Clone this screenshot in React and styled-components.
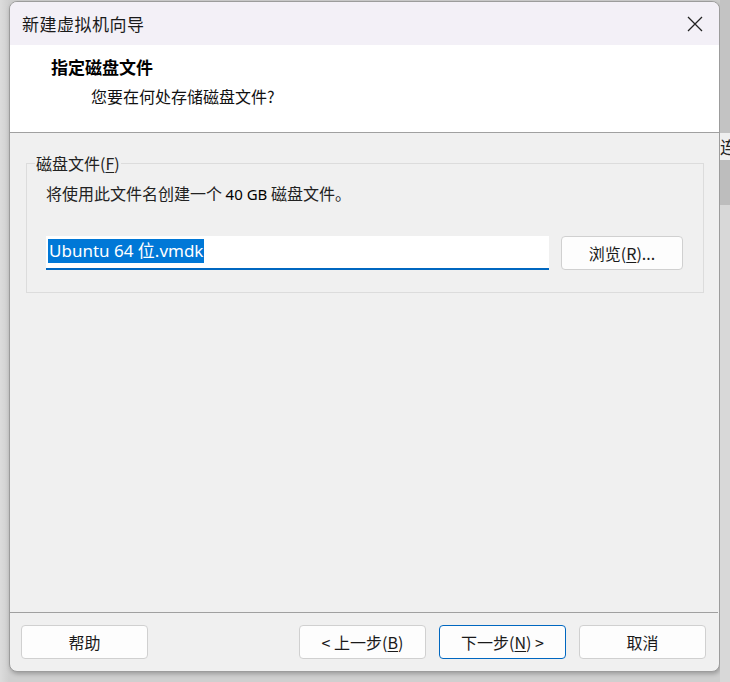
import styled, { createGlobalStyle } from "styled-components";

const GlobalStyle = createGlobalStyle`
  html, body {
    margin: 0;
    padding: 0;
    background: #d9d9d9;
    font-family: "Noto Sans CJK SC", "Noto Sans", sans-serif;
  }
`;

const Page = styled.div`
  display: flex;
  width: 730px;
  height: 682px;
  overflow: hidden;
  background: linear-gradient(to right, #dcdcdc, #cfcfcf 9px);
`;

const Gutter = styled.div`
  width: 9px;
  flex: none;
`;

const Window = styled.div`
  width: 711px;
  height: 671px;
  margin-top: 1px;
  flex: none;
  display: flex;
  flex-direction: column;
  background: #f0f0f0;
  border: 1px solid #9c9c9c;
  border-radius: 8px;
  box-sizing: border-box;
  overflow: hidden;
  box-shadow: 1px 2px 4px rgba(0, 0, 0, 0.25);
`;

const TitleBar = styled.div`
  height: 43px;
  flex: none;
  display: flex;
  align-items: center;
  justify-content: space-between;
  padding: 0 16px 0 12px;
  background: #f3f0f7;
`;

const Title = styled.div`
  font-size: 17px;
  color: #1a1a1a;
  letter-spacing: 0.5px;
`;

const CloseIcon = () => (
  <svg width="16" height="16" viewBox="0 0 16 16">
    <path d="M1 1 L15 15 M15 1 L1 15" stroke="#222" strokeWidth="1.3" fill="none" />
  </svg>
);

const Header = styled.div`
  height: 88px;
  flex: none;
  background: #ffffff;
  border-bottom: 1px solid #a0a0a0;
  padding: 10px 0 0 41px;
  box-sizing: border-box;
`;

const Heading = styled.div`
  font-size: 17px;
  font-weight: 700;
  color: #000;
  line-height: 24px;
`;

const SubHeading = styled.div`
  font-size: 16px;
  color: #111;
  line-height: 24px;
  margin: 5px 0 0 40px;
`;

const Body = styled.div`
  flex: 1;
  padding: 19px 15px 0 16px;
`;

const Group = styled.fieldset`
  margin: 0;
  padding: 8px 20px 22px 19px;
  border: 1px solid #dcdcdc;
  min-width: 0;
`;

const Legend = styled.legend`
  font-size: 16px;
  color: #222;
  padding: 0 1px;
  margin-left: -11px;
  line-height: 22px;
`;

const Mnemonic = styled.span`
  text-decoration: underline;
  text-underline-offset: 2px;
`;

const Info = styled.div`
  font-size: 16px;
  color: #222;
  line-height: 22px;
`;

const Num = styled.span`
  color: #000;
  font-family: "Noto Sans", sans-serif;
  font-size: 15px;
`;

const FileRow = styled.div`
  display: flex;
  align-items: center;
  gap: 12px;
  margin-top: 31px;
`;

const TextField = styled.div`
  flex: 1;
  height: 34px;
  display: flex;
  align-items: center;
  box-sizing: border-box;
  padding: 0 0 2px 2px;
  background: #ffffff;
  border-bottom: 2px solid #0067c0;
`;

const Selected = styled.span`
  background: #0078d7;
  color: #ffffff;
  font-size: 17px;
  line-height: 24px;
  padding: 0 1px;
  font-family: "Noto Sans", "Noto Sans CJK SC", sans-serif;
`;

const Button = styled.button`
  width: ${(p) => p.$w || 127}px;
  height: 34px;
  flex: none;
  box-sizing: border-box;
  background: #fdfdfd;
  border: 1px solid ${(p) => (p.$primary ? "#0067c0" : "#d0d0d0")};
  border-radius: 4px;
  font-family: "Noto Sans CJK SC", "Noto Sans", sans-serif;
  font-size: 16px;
  color: #1a1a1a;
  padding: 0;
`;

const Footer = styled.div`
  height: 59px;
  flex: none;
  display: flex;
  align-items: center;
  padding: 0 12px 0 11px;
  border-top: 1px solid #a0a0a0;
  margin: 0 1px 0 0;
  gap: 13px;
  box-sizing: border-box;
`;

const Spacer = styled.div`
  flex: 1;
`;

const BackStrip = styled.div`
  flex: 1;
  display: flex;
  flex-direction: column;
  background: #c6c6c6;
`;

const StripBand = styled.div`
  height: ${(p) => p.$h}px;
  flex: ${(p) => (p.$h ? "none" : 1)};
  background: ${(p) => p.$bg};
  font-size: 17px;
  line-height: ${(p) => p.$h}px;
  color: #222;
  overflow: hidden;
  white-space: nowrap;
`;

export default function App() {
  return (
    <>
      <GlobalStyle />
      <Page>
        <Gutter />
        <Window>
          <TitleBar>
            <Title>新建虚拟机向导</Title>
            <CloseIcon />
          </TitleBar>
          <Header>
            <Heading>指定磁盘文件</Heading>
            <SubHeading>您要在何处存储磁盘文件?</SubHeading>
          </Header>
          <Body>
            <Group>
              <Legend>
                磁盘文件(<Mnemonic>F</Mnemonic>)
              </Legend>
              <Info>
                将使用此文件名创建一个 <Num>40 GB</Num> 磁盘文件。
              </Info>
              <FileRow>
                <TextField>
                  <Selected>Ubuntu 64 位.vmdk</Selected>
                </TextField>
                <Button $w={122}>
                  浏览(<Mnemonic>R</Mnemonic>)...
                </Button>
              </FileRow>
            </Group>
          </Body>
          <Footer>
            <Button>帮助</Button>
            <Spacer />
            <Button>
              &lt; 上一步(<Mnemonic>B</Mnemonic>)
            </Button>
            <Button $primary>
              下一步(<Mnemonic>N</Mnemonic>) &gt;
            </Button>
            <Button>取消</Button>
          </Footer>
        </Window>
        <BackStrip>
          <StripBand $h={133} $bg="#c3c3c3" />
          <StripBand $h={27} $bg="#efefef">连</StripBand>
          <StripBand $h={45} $bg="#bdbdbd" />
          <StripBand $bg="#d8d8d8" />
        </BackStrip>
      </Page>
    </>
  );
}
